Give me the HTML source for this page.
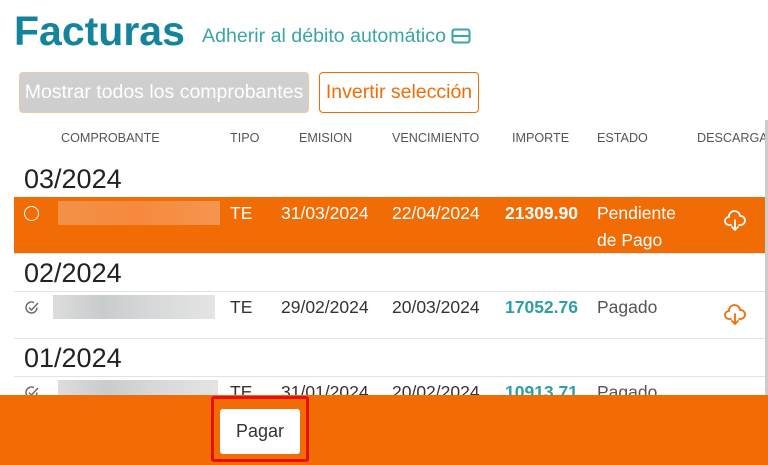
<!DOCTYPE html>
<html><head><meta charset="utf-8"><style>
*{margin:0;padding:0;box-sizing:border-box}
body{width:768px;height:465px;overflow:hidden;background:#fff;font-family:"Liberation Sans",sans-serif;position:relative;color:#333}
.a{position:absolute;white-space:nowrap}
.h{font-size:12.6px;color:#555;top:131px}
.g{font-size:27px;color:#222;left:24px}
.line{position:absolute;left:14px;right:3px;height:1px;background:#e2e2e2}
.c{font-size:17.5px}
.blur{position:absolute;height:24px;background:linear-gradient(90deg,#ddd,#c9cccd 30%,#d6d8d9 60%,#e4e4e4)}
</style></head><body>
<div class="a" style="left:14px;top:8px;font-size:41px;font-weight:bold;color:#14849d">Facturas</div>
<div class="a" style="left:202px;top:25px;font-size:19.6px;color:#3aa5a8">Adherir al débito automático</div>
<svg class="a" style="left:451px;top:28px" width="20" height="16" viewBox="0 0 20 16"><rect x="1.5" y="1.5" width="17" height="13" rx="2" fill="none" stroke="#3aa5a8" stroke-width="2"/><line x1="2" y1="8" x2="18" y2="8" stroke="#3aa5a8" stroke-width="2"/></svg>
<div class="a" style="left:19px;top:72px;width:290px;height:41px;background:#cfcfcf;border:1px solid #f5c8a0;border-radius:4px;color:#fff;font-size:19.5px;line-height:39px;text-align:center">Mostrar todos los comprobantes</div>
<div class="a" style="left:319px;top:72px;width:160px;height:41px;border:1px solid #f26c05;border-radius:4px;color:#f26c05;font-size:19.5px;line-height:39px;text-align:center">Invertir selección</div>
<div class="a h" style="left:61px">COMPROBANTE</div>
<div class="a h" style="left:230px">TIPO</div>
<div class="a h" style="left:299px">EMISION</div>
<div class="a h" style="left:392px">VENCIMIENTO</div>
<div class="a h" style="left:512px">IMPORTE</div>
<div class="a h" style="left:597px">ESTADO</div>
<div class="a h" style="left:697px">DESCARGA</div>
<div class="a g" style="top:164px">03/2024</div>
<div class="a" style="left:14px;top:197px;width:751px;height:56px;background:#f26c05"></div>
<div class="a" style="left:24px;top:206px;width:15px;height:15px;border:1.5px solid #fff;border-radius:50%"></div>
<div class="blur" style="left:58px;top:201px;width:162px;background:linear-gradient(90deg,#f39049,#f58a3d 50%,#f49550)"></div>
<div class="a c" style="left:230px;top:203px;color:#fff">TE</div>
<div class="a c" style="left:281px;top:203px;color:#fff">31/03/2024</div>
<div class="a c" style="left:392px;top:203px;color:#fff">22/04/2024</div>
<div class="a c" style="left:505px;top:203px;color:#fff;font-weight:bold">21309.90</div>
<div class="a c" style="left:597px;top:200px;color:#fff;line-height:27px;white-space:normal">Pendiente<br>de Pago</div>
<svg class="a" style="left:724px;top:210px" width="22" height="22" viewBox="0 0 22 22" fill="none" stroke="#fff" stroke-width="1.8" stroke-linecap="round" stroke-linejoin="round"><path d="M7 15H5a4 4 0 0 1 0-8 5.5 5.5 0 0 1 11-1 4.5 4.5 0 0 1 1 9h-2"/><path d="M11 10v10M8 17l3 3 3-3"/></svg>
<div class="line" style="top:253px"></div>
<div class="a g" style="top:258px">02/2024</div>
<div class="line" style="top:291px"></div>
<svg class="a" style="left:24px;top:300px" width="16" height="16" viewBox="0 0 16 16" fill="none" stroke="#666" stroke-width="1.4"><path d="M13 7.5A5.5 5.5 0 1 1 10 2.6"/><path d="M5 7.5l2.5 2.5L14 3"/></svg>
<div class="blur" style="left:53px;top:295px;width:162px"></div>
<div class="a c" style="left:230px;top:297px">TE</div>
<div class="a c" style="left:281px;top:297px">29/02/2024</div>
<div class="a c" style="left:392px;top:297px">20/03/2024</div>
<div class="a c" style="left:505px;top:297px;color:#2c9fa3;font-weight:bold">17052.76</div>
<div class="a c" style="left:597px;top:297px;color:#555">Pagado</div>
<svg class="a" style="left:724px;top:304px" width="22" height="22" viewBox="0 0 22 22" fill="none" stroke="#f26c05" stroke-width="1.8" stroke-linecap="round" stroke-linejoin="round"><path d="M7 15H5a4 4 0 0 1 0-8 5.5 5.5 0 0 1 11-1 4.5 4.5 0 0 1 1 9h-2"/><path d="M11 10v10M8 17l3 3 3-3"/></svg>
<div class="line" style="top:338px"></div>
<div class="a g" style="top:343px">01/2024</div>
<div class="line" style="top:376px"></div>
<svg class="a" style="left:24px;top:385px" width="16" height="16" viewBox="0 0 16 16" fill="none" stroke="#666" stroke-width="1.4"><path d="M13 7.5A5.5 5.5 0 1 1 10 2.6"/><path d="M5 7.5l2.5 2.5L14 3"/></svg>
<div class="blur" style="left:58px;top:380px;width:160px"></div>
<div class="a c" style="left:230px;top:382px">TE</div>
<div class="a c" style="left:281px;top:382px">31/01/2024</div>
<div class="a c" style="left:392px;top:382px">20/02/2024</div>
<div class="a c" style="left:505px;top:382px;color:#2c9fa3;font-weight:bold">10913.71</div>
<div class="a c" style="left:597px;top:382px;color:#555">Pagado</div>
<div class="a" style="left:765px;top:120px;width:3px;height:275px;background:#ccc"></div>
<div class="a" style="left:0;top:395px;width:768px;height:70px;background:#f26c05"></div>
<div class="a" style="left:211px;top:396px;width:98px;height:66px;border:3px solid #e8100e;border-radius:3px"></div>
<div class="a" style="left:220px;top:409px;width:80px;height:45px;background:#fff;border-radius:3px;font-size:18px;color:#333;line-height:45px;text-align:center">Pagar</div>
</body></html>
